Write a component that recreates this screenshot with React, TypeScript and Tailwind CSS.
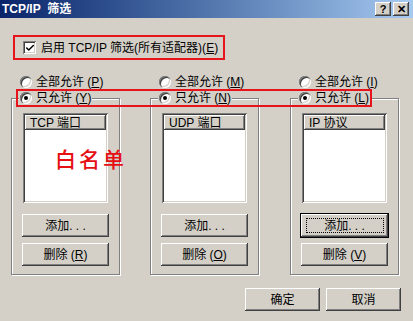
import { Check } from "lucide-react"

const raised =
  "bg-[#d4d0c8] shadow-[inset_-1px_-1px_0_#404040,inset_1px_1px_0_#fff,inset_-2px_-2px_0_#808080]"
const sunken =
  "shadow-[inset_1px_1px_0_#808080,inset_-1px_-1px_0_#fff,inset_2px_2px_0_#404040,inset_-2px_-2px_0_#d4d0c8]"

const groups = [
  { all: "P", only: "Y", header: "TCP 端口", del: "R", focused: false, note: true },
  { all: "M", only: "N", header: "UDP 端口", del: "O", focused: false, note: false },
  { all: "I", only: "L", header: "IP 协议", del: "V", focused: true, note: false },
]

function Radio({ checked }: { checked?: boolean }) {
  return (
    <span className="w-[12px] h-[12px] rounded-full bg-white shadow-[inset_1px_1px_0_#808080,inset_2px_2px_0_#404040,inset_-1px_-1px_0_#fff,inset_-2px_-2px_0_#d4d0c8] flex items-center justify-center shrink-0">
      {checked && <span className="w-[4px] h-[4px] rounded-full bg-black" />}
    </span>
  )
}

function RadioLabel({ text, mn, checked }: { text: string; mn: string; checked?: boolean }) {
  return (
    <div className="flex items-center gap-[4px] h-[14px]">
      <Radio checked={checked} />
      <span>
        {text} (<span className="underline">{mn}</span>)
      </span>
    </div>
  )
}

function Button({ children, className = "" }: { children: React.ReactNode; className?: string }) {
  return (
    <div className={`h-[23px] flex items-center justify-center ${raised} ${className}`}>
      {children}
    </div>
  )
}

export default function App() {
  return (
    <div className="w-[413px] h-[321px] bg-[#d4d0c8] relative overflow-hidden text-[12px] leading-[14px] text-black font-['Liberation_Sans','Noto_Sans_CJK_SC',sans-serif]">
      {/* title bar */}
      <div className="h-[18px] bg-gradient-to-r from-[#0a246a] to-[#a6caf0] flex items-center justify-between pl-[2px] pr-[4px]">
        <span className="text-white font-bold">TCP/IP&nbsp; 筛选</span>
        <div className="flex gap-[2px]">
          <div className={`w-[16px] h-[14px] flex items-center justify-center font-bold text-[11px] leading-none ${raised}`}>
            ?
          </div>
          <div className={`w-[16px] h-[14px] flex items-center justify-center font-bold text-[11px] leading-none ${raised}`}>
            ✕
          </div>
        </div>
      </div>

      {/* enable checkbox */}
      <div className="ml-[13px] mt-[17px] w-[212px] h-[25px] border-2 border-[#e8141c] flex items-center pl-[8px] gap-[5px]">
        <span className={`w-[13px] h-[13px] bg-white flex items-center justify-center ${sunken}`}>
          <Check size={10} strokeWidth={3.5} />
        </span>
        <span>
          启用 TCP/IP 筛选(所有适配器)(<span className="underline">E</span>)
        </span>
      </div>

      {/* three groups */}
      <div className="flex gap-[30px] ml-[11px] mt-[15px]">
        {groups.map((g, i) => (
          <div key={i} className={`w-[109px] ${i === 2 ? "ml-[1px]" : ""}`}>
            <div className="pl-[9px]">
              <RadioLabel text="全部允许" mn={g.all} />
            </div>
            <div className="mt-[9px] border border-[#808080] shadow-[inset_1px_1px_0_#fff,1px_1px_0_#fff] pb-[8px]">
              <div className="-mt-[8px] ml-[7px] w-fit px-[1px] bg-[#d4d0c8]">
                <RadioLabel text="只允许" mn={g.only} checked />
              </div>
              <div className={`relative mt-[8px] ml-[11px] w-[85px] h-[90px] bg-white p-[2px] ${sunken}`}>
                <div className={`h-[15px] pl-[5px] flex items-center ${raised}`}>{g.header}</div>
                {g.note && (
                  <div className="absolute left-[32px] top-[33px] text-[21px] leading-[24px] tracking-[3px] text-[#e60f14] font-medium font-['Noto_Sans_CJK_SC',sans-serif] whitespace-nowrap">
                    白名单
                  </div>
                )}
              </div>
              <div className="mx-[10px] mt-[11px] flex flex-col gap-[6px]">
                <Button className={g.focused ? "outline outline-1 outline-black" : ""}>
                  {g.focused ? (
                    <span className="w-[78px] h-[15px] border border-dotted border-black flex items-center justify-center">
                      添加. . .
                    </span>
                  ) : (
                    "添加. . ."
                  )}
                </Button>
                <Button>
                  删除 (<span className="underline">{g.del}</span>)
                </Button>
              </div>
            </div>
          </div>
        ))}
      </div>

      {/* OK / Cancel */}
      <div className="flex justify-end gap-[6px] pr-[12px] mt-[13px]">
        <Button className="w-[75px]">确定</Button>
        <Button className="w-[75px]">取消</Button>
      </div>

      {/* annotation around "只允许" radios */}
      <div className="absolute left-[16px] top-[89px] w-[356px] h-[18px] border-2 border-[#e8141c] pointer-events-none" />
    </div>
  )
}
